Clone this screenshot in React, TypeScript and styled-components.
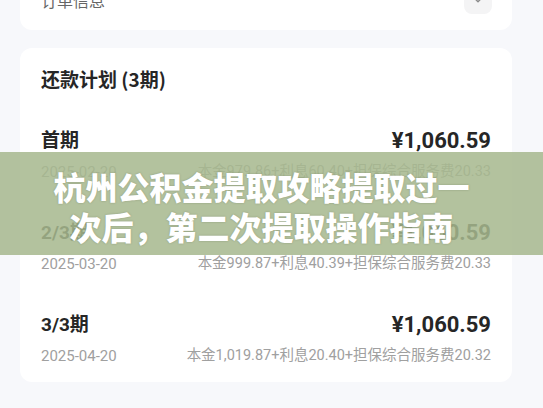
import React from "react";
import styled, { createGlobalStyle } from "styled-components";

const GlobalStyle = createGlobalStyle`
    html, body {
        margin: 0;
        padding: 0;
        background: #f7f8fb;
    }
    body {
        font-family: Roboto, "Noto Sans CJK SC", "Noto Sans", sans-serif;
    }
`;

const Page = styled.div`
    position: relative;
    height: 408px;
    overflow: hidden;
    padding: 0 31px 0 20px;
    box-sizing: border-box;
    background: #f7f8fb;
`;

const Card = styled.div`
    background: #ffffff;
    border-radius: 12px;
    box-sizing: border-box;
`;

const OrderCard = styled(Card)`
    margin-top: -28px;
    display: flex;
    align-items: center;
    justify-content: space-between;
    padding: 14px 20px 16px 21px;
`;

const OrderLabel = styled.div`
    font-family: "Noto Sans CJK SC", sans-serif;
    font-size: 16px;
    line-height: 28px;
    color: #666666;
`;

const ChevronButton = styled.div`
    width: 28px;
    height: 28px;
    border-radius: 8px;
    background: #f4f4f5;
    display: flex;
    align-items: center;
    justify-content: center;
    color: #8a8a8a;
`;

const PlanCard = styled(Card)`
    margin-top: 18px;
    padding: 19px 21px 15px 21px;
`;

const PlanTitle = styled.div`
    font-family: "Noto Sans CJK SC", sans-serif;
    font-weight: 700;
    font-size: 19px;
    line-height: 24px;
    color: #262626;
    margin-bottom: 36px;
`;

const Installment = styled.div`
    display: grid;
    grid-template-columns: auto 1fr;
    row-gap: 6px;
    margin-bottom: 36px;
    &:last-child {
        margin-bottom: 0;
    }
`;

const Period = styled.div`
    font-family: Roboto, "Noto Sans CJK SC", sans-serif;
    font-weight: 700;
    font-size: 19px;
    line-height: 28px;
    color: #262626;
`;

const Amount = styled.div`
    font-family: Roboto, sans-serif;
    font-weight: 700;
    font-size: 22px;
    line-height: 28px;
    color: #262626;
    text-align: right;
`;

const DateText = styled.div`
    font-family: Roboto, sans-serif;
    font-size: 15px;
    line-height: 22px;
    color: #a0a0a0;
`;

const Breakdown = styled.div`
    font-family: Roboto, "Noto Sans CJK SC", sans-serif;
    font-size: 14.5px;
    line-height: 22px;
    color: #a0a0a0;
    text-align: right;
    white-space: nowrap;
`;

const Banner = styled.div`
    position: absolute;
    left: 0;
    right: 0;
    top: 152px;
    height: 103px;
    background: rgba(166, 184, 142, 0.86);
    display: flex;
    align-items: center;
    justify-content: center;
    padding: 4px 20px 0 0;
    box-sizing: border-box;
`;

const BannerTitle = styled.h1`
    margin: 0;
    width: 440px;
    font-family: "Noto Sans CJK SC", sans-serif;
    font-weight: 900;
    font-size: 32px;
    line-height: 40px;
    color: #ffffff;
    text-align: center;
    text-shadow: 0 0 2px rgba(60, 70, 50, 0.35);
`;

const plan = [
    { period: "首期", amount: "¥1,060.59", date: "2025-02-20", detail: "本金979.86+利息60.40+担保综合服务费20.33" },
    { period: "2/3期", amount: "¥1,060.59", date: "2025-03-20", detail: "本金999.87+利息40.39+担保综合服务费20.33" },
    { period: "3/3期", amount: "¥1,060.59", date: "2025-04-20", detail: "本金1,019.87+利息20.40+担保综合服务费20.32" },
];

const App = () => {
    return <>
        <GlobalStyle />
        <Page>
            <OrderCard>
                <OrderLabel>订单信息</OrderLabel>
                <ChevronButton>
                    <svg width="14" height="14" viewBox="0 0 24 24" fill="none" stroke="currentColor" strokeWidth="2.4" strokeLinecap="round" strokeLinejoin="round">
                        <polyline points="6 9 12 15 18 9" />
                    </svg>
                </ChevronButton>
            </OrderCard>
            <PlanCard>
                <PlanTitle>还款计划 (3期)</PlanTitle>
                {plan.map(item =>
                    <Installment key={item.period}>
                        <Period>{item.period}</Period>
                        <Amount>{item.amount}</Amount>
                        <DateText>{item.date}</DateText>
                        <Breakdown>{item.detail}</Breakdown>
                    </Installment>
                )}
            </PlanCard>
            <Banner>
                <BannerTitle>杭州公积金提取攻略提取过一次后，第二次提取操作指南</BannerTitle>
            </Banner>
        </Page>
    </>
}

export default App;
